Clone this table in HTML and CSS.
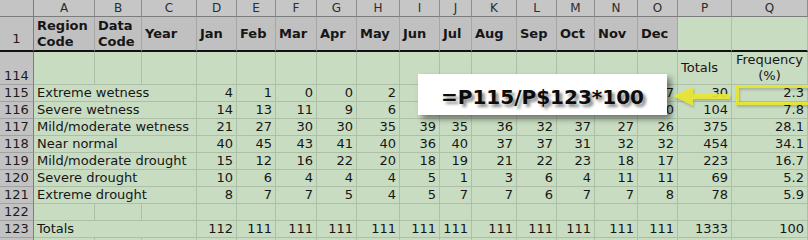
FILE: index.html
```html
<!DOCTYPE html>
<html>
<head>
<meta charset="utf-8">
<link rel="stylesheet" href="styles.css">
</head>
<body>
<div class="sheet">
  <div class="corner"></div>
  <div class="ch">A</div><div class="ch">B</div><div class="ch">C</div><div class="ch">D</div><div class="ch">E</div><div class="ch">F</div><div class="ch">G</div><div class="ch">H</div><div class="ch">I</div><div class="ch">J</div><div class="ch">K</div><div class="ch">L</div><div class="ch">M</div><div class="ch">N</div><div class="ch">O</div><div class="ch">P</div><div class="ch">Q</div>

  <div class="rh r1">1</div>
  <div class="hd"><span>Region<br>Code</span></div><div class="hd"><span>Data<br>Code</span></div><div class="hd">Year</div>
  <div class="hd">Jan</div><div class="hd">Feb</div><div class="hd">Mar</div><div class="hd">Apr</div><div class="hd">May</div><div class="hd">Jun</div><div class="hd">Jul</div><div class="hd">Aug</div><div class="hd">Sep</div><div class="hd">Oct</div><div class="hd">Nov</div><div class="hd">Dec</div>
  <div class="c r1g"></div><div class="c r1g"></div>

  <div class="rh">114</div>
  <div class="c"></div><div class="c"></div><div class="c"></div>
  <div class="c"></div><div class="c"></div><div class="c"></div><div class="c"></div><div class="c"></div><div class="c"></div><div class="c"></div><div class="c"></div><div class="c"></div><div class="c"></div><div class="c"></div><div class="c"></div>
  <div class="c lt">Totals</div><div class="c ctr"><span>Frequency<br>(%)</span></div>

  <div class="rh">115</div><div class="c lbl">Extreme wetness</div>
  <div class="c n">4</div><div class="c n">1</div><div class="c n">0</div><div class="c n">0</div><div class="c n">2</div><div class="c n"></div><div class="c n"></div><div class="c n"></div><div class="c n"></div><div class="c n"></div><div class="c n"></div><div class="c n">7</div><div class="c n">30</div><div class="c n">2.3</div>

  <div class="rh">116</div><div class="c lbl">Severe wetness</div>
  <div class="c n">14</div><div class="c n">13</div><div class="c n">11</div><div class="c n">9</div><div class="c n">6</div><div class="c n"></div><div class="c n"></div><div class="c n"></div><div class="c n"></div><div class="c n"></div><div class="c n"></div><div class="c n">10</div><div class="c n">104</div><div class="c n">7.8</div>

  <div class="rh">117</div><div class="c lbl">Mild/moderate wetness</div>
  <div class="c n">21</div><div class="c n">27</div><div class="c n">30</div><div class="c n">30</div><div class="c n">35</div><div class="c n">39</div><div class="c n">35</div><div class="c n">36</div><div class="c n">32</div><div class="c n">37</div><div class="c n">27</div><div class="c n">26</div><div class="c n">375</div><div class="c n">28.1</div>

  <div class="rh">118</div><div class="c lbl">Near normal</div>
  <div class="c n">40</div><div class="c n">45</div><div class="c n">43</div><div class="c n">41</div><div class="c n">40</div><div class="c n">36</div><div class="c n">40</div><div class="c n">37</div><div class="c n">37</div><div class="c n">31</div><div class="c n">32</div><div class="c n">32</div><div class="c n">454</div><div class="c n">34.1</div>

  <div class="rh">119</div><div class="c lbl">Mild/moderate drought</div>
  <div class="c n">15</div><div class="c n">12</div><div class="c n">16</div><div class="c n">22</div><div class="c n">20</div><div class="c n">18</div><div class="c n">19</div><div class="c n">21</div><div class="c n">22</div><div class="c n">23</div><div class="c n">18</div><div class="c n">17</div><div class="c n">223</div><div class="c n">16.7</div>

  <div class="rh">120</div><div class="c lbl">Severe drought</div>
  <div class="c n">10</div><div class="c n">6</div><div class="c n">4</div><div class="c n">4</div><div class="c n">4</div><div class="c n">5</div><div class="c n">1</div><div class="c n">3</div><div class="c n">6</div><div class="c n">4</div><div class="c n">11</div><div class="c n">11</div><div class="c n">69</div><div class="c n">5.2</div>

  <div class="rh">121</div><div class="c lbl">Extreme drought</div>
  <div class="c n">8</div><div class="c n">7</div><div class="c n">7</div><div class="c n">5</div><div class="c n">4</div><div class="c n">5</div><div class="c n">7</div><div class="c n">7</div><div class="c n">6</div><div class="c n">7</div><div class="c n">7</div><div class="c n">8</div><div class="c n">78</div><div class="c n">5.9</div>

  <div class="rh">122</div>
  <div class="c"></div><div class="c"></div><div class="c"></div>
  <div class="c"></div><div class="c"></div><div class="c"></div><div class="c"></div><div class="c"></div><div class="c"></div><div class="c"></div><div class="c"></div><div class="c"></div><div class="c"></div><div class="c"></div><div class="c"></div><div class="c"></div><div class="c"></div>

  <div class="rh">123</div><div class="c lbl">Totals</div>
  <div class="c n">112</div><div class="c n">111</div><div class="c n">111</div><div class="c n">111</div><div class="c n">111</div><div class="c n">111</div><div class="c n">111</div><div class="c n">111</div><div class="c n">111</div><div class="c n">111</div><div class="c n">111</div><div class="c n">111</div><div class="c n">1333</div><div class="c n">100</div>

  <div class="rh"></div>
  <div class="c"></div><div class="c"></div><div class="c"></div>
  <div class="c"></div><div class="c"></div><div class="c"></div><div class="c"></div><div class="c"></div><div class="c"></div><div class="c"></div><div class="c"></div><div class="c"></div><div class="c"></div><div class="c"></div><div class="c"></div><div class="c"></div><div class="c"></div>
</div>

<div class="callout">=P115/P$123*100</div>

<svg class="pointer" width="142" height="28" viewBox="0 0 142 28">
  <g fill="#e8e632" fill-opacity="0.92">
    <polygon points="5,14 25,5 25,12 62,12 62,17 25,17 25,24"/>
  </g>
  <rect x="69.5" y="4.5" width="72" height="17" fill="none" stroke="#e8e632" stroke-opacity="0.9" stroke-width="3"/>
</svg>
</body>
</html>
```

FILE: styles.css
```css
html, body {
  margin: 0;
  padding: 0;
  background: #c8dcc2;
}

body {
  width: 808px;
  height: 240px;
  overflow: hidden;
  position: relative;
  font-family: "DejaVu Sans", Verdana, sans-serif;
  font-size: 13px;
  color: #161616;
}

.sheet {
  display: grid;
  grid-template-columns: 34px 61px 47px 55px 40px 39px 41px 40px 43px 40px 32px 45px 40px 38px 43px 40px 54px 76px;
  grid-template-rows: 17px 35px 33px repeat(9, 17px) 3px;
  overflow: hidden;
}

.sheet > div {
  box-sizing: border-box;
  border-right: 1px solid #adc0a7;
  border-bottom: 1px solid #adc0a7;
  white-space: nowrap;
  overflow: hidden;
  display: flex;
  align-items: center;
  line-height: 16px;
}

.sheet .corner {
  background: #c4c4c4;
  border-right-color: #7c7c7c;
  border-bottom-color: #7c7c7c;
}

.sheet .ch {
  background: #c6c6c6;
  justify-content: center;
  font-size: 12px;
  color: #2c2c2c;
  border-right-color: #8e8e8e;
  border-bottom-color: #7c7c7c;
}

.sheet .rh {
  background: #c2c2c2;
  justify-content: center;
  align-items: flex-end;
  padding-bottom: 0;
  border-right-color: #7c7c7c;
  border-bottom-color: #a2a2a2;
  color: #1c1c1c;
}

.sheet .r1 {
  border-bottom: 2px solid #111;
  padding-bottom: 3px;
}

.sheet .hd {
  background: #c0c0c0;
  font-weight: bold;
  padding-left: 3px;
  border-right-color: #a6a6a6;
  border-bottom: 2px solid #111;
}

.sheet .r1g {
  border-bottom: 2px solid #111;
}

.c {
  background: #c8dcc2;
}

.sheet .n {
  justify-content: flex-end;
  padding-right: 3px;
}

.sheet .lbl {
  grid-column: span 3;
  padding-left: 3px;
}

.sheet .lt {
  padding-left: 3px;
}

.sheet .ctr {
  justify-content: center;
  text-align: center;
}

.callout {
  position: absolute;
  left: 418px;
  top: 74px;
  width: 249px;
  height: 41px;
  box-sizing: border-box;
  padding-top: 4px;
  background: #fff;
  box-shadow: 4px 4px 6px rgba(0, 0, 0, 0.45);
  display: flex;
  align-items: center;
  justify-content: center;
  font-family: "DejaVu Sans", Verdana, sans-serif;
  font-weight: bold;
  font-size: 20px;
  color: #0c0c0c;
  text-shadow: 3px 3px 3px rgba(0, 0, 0, 0.45);
}

.pointer {
  position: absolute;
  left: 668px;
  top: 82px;
  filter: drop-shadow(1px 2px 1px rgba(0, 0, 0, 0.2));
}
```
